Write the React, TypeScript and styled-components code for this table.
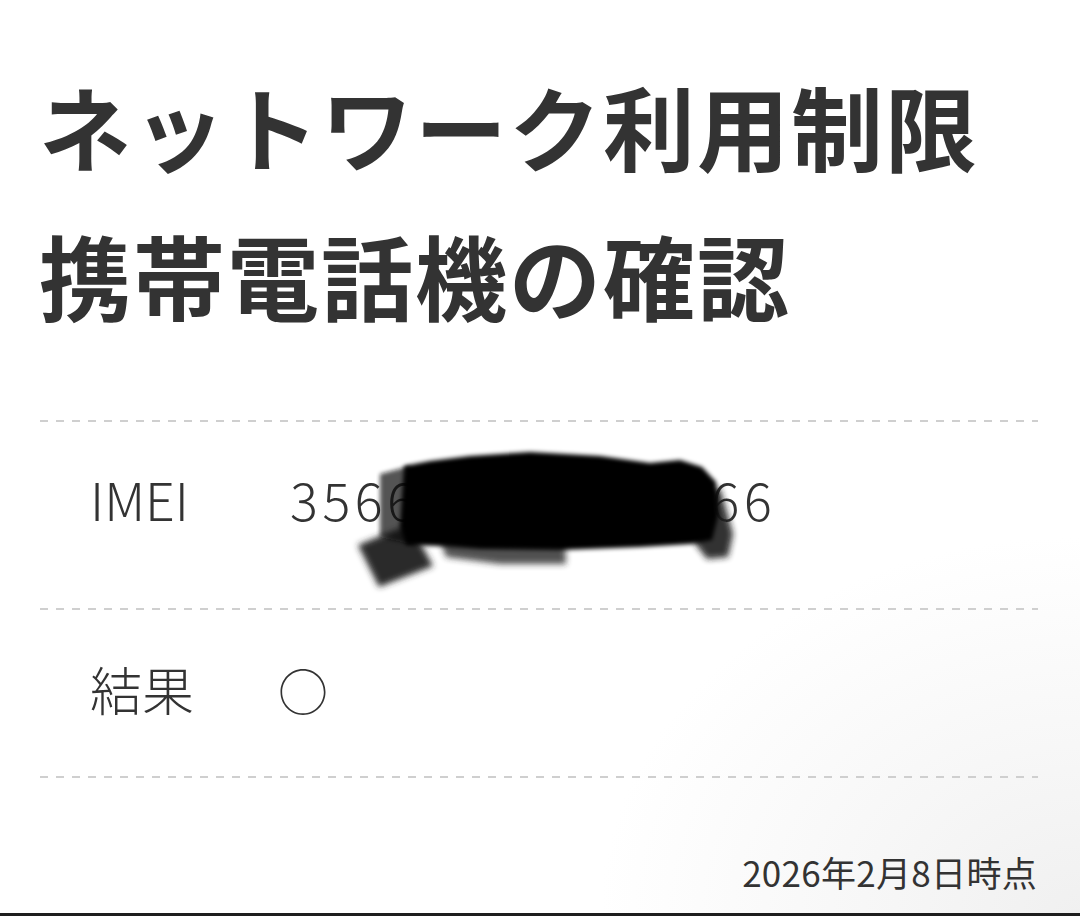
import React from "react";
import styled, { createGlobalStyle } from "styled-components";

const Global = createGlobalStyle`
  html, body {
    margin: 0;
    padding: 0;
    background: #ffffff;
  }
  body {
    font-family: "Noto Sans CJK JP", "Noto Sans", sans-serif;
    color: #333;
  }
`;

const Page = styled.div`
  min-height: 916px;
  display: flex;
  flex-direction: column;
  background: radial-gradient(
    ellipse 480px 380px at 100% 100%,
    #f0f0f0 0%,
    #f7f7f7 45%,
    #ffffff 100%
  );
`;

const Content = styled.main`
  flex: 1;
  padding: 50px 42px 0 40px;
  display: flex;
  flex-direction: column;
`;

const Title = styled.h1`
  margin: 0 0 72px -1px;
  font-family: "Noto Sans CJK JP", sans-serif;
  font-weight: 700;
  font-size: 92px;
  line-height: 149px;
  letter-spacing: 2px;
  color: #333;
  white-space: nowrap;
`;

const Divider = styled.div`
  height: 2px;
  background: repeating-linear-gradient(
    to right,
    #cfcfcf 0,
    #cfcfcf 8px,
    transparent 8px,
    transparent 16px
  );
`;

const Row = styled.div<{ $top: number; $bottom: number }>`
  display: grid;
  grid-template-columns: 192px 1fr;
  align-items: center;
  padding: ${(p) => p.$top}px 0 ${(p) => p.$bottom}px 50px;
  font-size: 52px;
  line-height: 62px;
  font-weight: 300;
  color: #333;
`;

const Label = styled.div`
  font-family: "Noto Sans CJK JP", sans-serif;
`;

const Value = styled.div`
  position: relative;
  font-family: "Noto Sans CJK JP", sans-serif;
`;

const Digits = styled.span`
  display: inline-block;
  margin-left: 8px;
  letter-spacing: 4.6px;
`;

const Circle = styled.span`
  font-size: 50px;
  margin-left: -4px;
`;

const Redaction = styled.svg`
  position: absolute;
  left: 58px;
  top: -22px;
  width: 420px;
  height: 150px;
  pointer-events: none;
`;

const DateLine = styled.div`
  margin-top: 74px;
  text-align: right;
  font-size: 35px;
  line-height: 40px;
  font-weight: 400;
  letter-spacing: 0.3px;
  color: #333;
  padding-right: 1px;
`;

const BottomEdge = styled.div`
  height: 3px;
  background: #1e1e1e;
`;

function Scribble() {
  // page-coordinate shapes, offset by (340, 450)
  const off = (pts: [number, number][]) =>
    pts.map(([x, y]) => `${x - 340},${y - 450}`).join(" ");
  return (
    <Redaction viewBox="0 0 420 150">
      <defs>
        <filter id="soft" x="-10%" y="-20%" width="120%" height="140%">
          <feGaussianBlur stdDeviation="2" />
        </filter>
        <filter id="softer" x="-20%" y="-30%" width="140%" height="160%">
          <feGaussianBlur stdDeviation="3" />
        </filter>
      </defs>
      <polygon
        filter="url(#softer)"
        fill="#2b2b2b"
        points={off([
          [358, 549],
          [410, 528],
          [433, 570],
          [379, 591],
        ])}
      />
      <polygon
        filter="url(#softer)"
        fill="#262626"
        opacity={0.8}
        points={off([
          [440, 544],
          [565, 546],
          [566, 568],
          [500, 568],
          [446, 561],
        ])}
      />
      <polygon
        filter="url(#softer)"
        fill="#1c1c1c"
        opacity={0.9}
        points={off([
          [688, 498],
          [720, 492],
          [733, 538],
          [728, 561],
          [707, 563],
          [694, 546],
        ])}
      />
      <polygon
        filter="url(#soft)"
        fill="#111"
        opacity={0.7}
        points={off([
          [380, 478],
          [410, 470],
          [412, 548],
          [380, 541],
        ])}
      />
      <polygon
        filter="url(#soft)"
        fill="#000"
        points={off([
          [404, 470],
          [430, 465],
          [470, 460],
          [530, 456],
          [600, 460],
          [650, 467],
          [680, 464],
          [702, 471],
          [716, 486],
          [718, 520],
          [712, 544],
          [690, 548],
          [640, 551],
          [560, 554],
          [480, 553],
          [440, 550],
          [406, 549],
          [400, 530],
        ])}
      />
    </Redaction>
  );
}

export default function App() {
  return (
    <>
      <Global />
      <Page>
        <Content>
          <Title>
            ネットワーク利用制限
            <br />
            携帯電話機の確認
          </Title>
          <Divider />
          <Row $top={46} $bottom={78}>
            <Label>IMEI</Label>
            <Value>
              <Digits>356600000000366</Digits>
              <Scribble />
            </Value>
          </Row>
          <Divider />
          <Row $top={48} $bottom={56}>
            <Label>結果</Label>
            <Value>
              <Circle>○</Circle>
            </Value>
          </Row>
          <Divider />
          <DateLine>2026年2月8日時点</DateLine>
        </Content>
        <BottomEdge />
      </Page>
    </>
  );
}
